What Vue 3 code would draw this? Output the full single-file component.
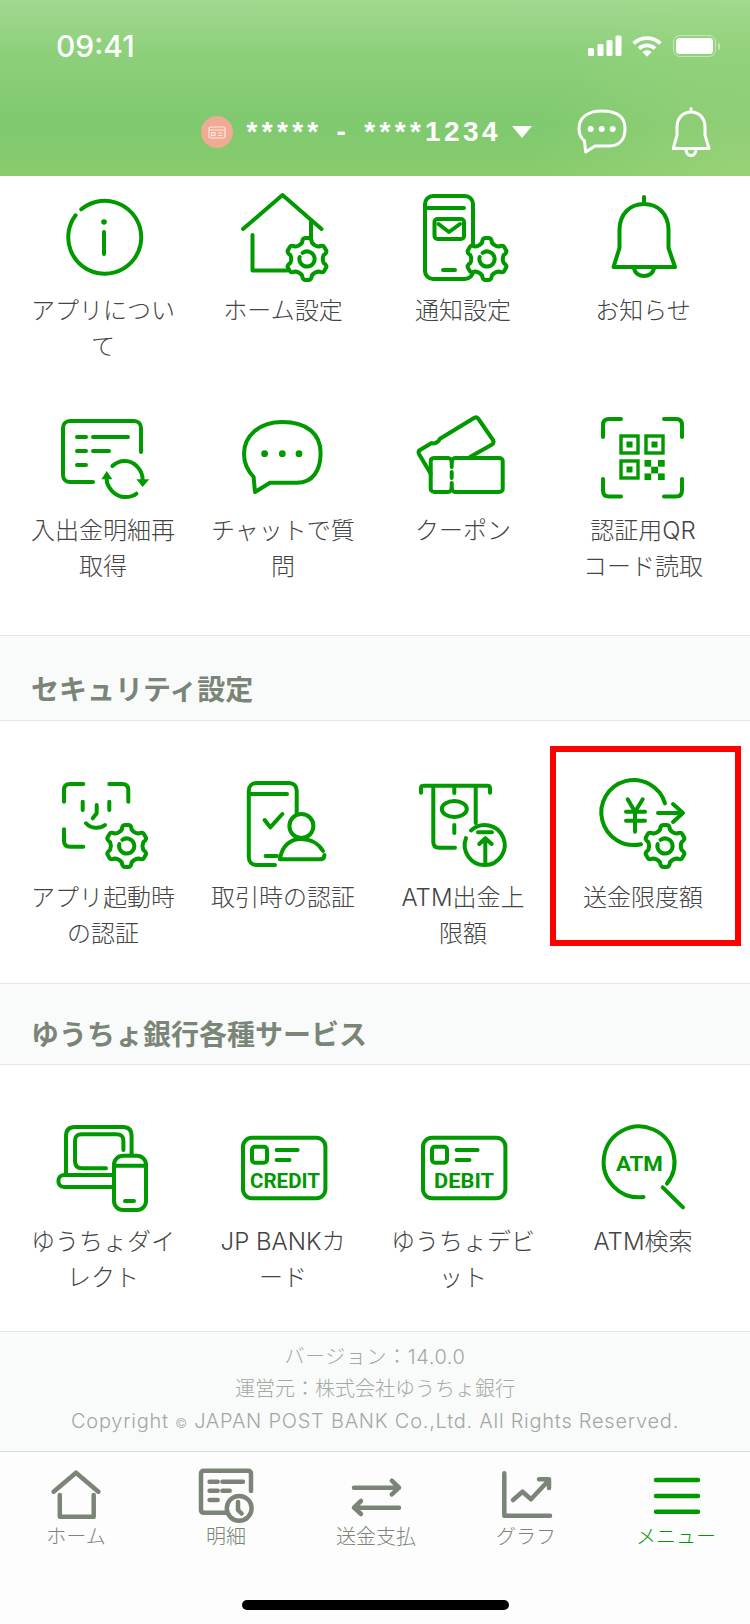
<script setup>
// Six-tooth settings gear, centred on the origin, placed with a translate in each icon
function buildGear() {
  const at = (deg, r) => {
    const a = (deg * Math.PI) / 180
    return `${(r * Math.cos(a)).toFixed(2)} ${(r * Math.sin(a)).toFixed(2)}`
  }
  let d = ''
  for (let i = 0; i < 6; i++) {
    const a = i * 60 - 90
    d += `${i === 0 ? 'M' : 'L'}${at(a - 17, 17)} Q${at(a - 12, 21.5)} ${at(a - 5, 21)} L${at(a + 5, 21)} Q${at(a + 12, 21.5)} ${at(a + 17, 17)} Q${at(a + 30, 15)} ${at(a + 43, 17)} `
  }
  return d + 'Z'
}
const gear = buildGear()
// inner ring of the gear, left open at the upper left
const ring = 'M-4.36 -6.22A7.6 7.6 0 1 1 -7.34 -1.97'

const tabs = ['ホーム', '明細', '送金支払', 'グラフ', 'メニュー']
</script>

<template>
  <div class="screen">
    <header class="top">
      <div class="status">
        <span class="clock">09:41</span>
        <div class="status-icons">
          <svg class="signal" width="34" height="22" viewBox="0 0 34 22" fill="#fff">
            <rect x="0" y="13" width="6" height="8" rx="1.5" />
            <rect x="9.5" y="9" width="6" height="12" rx="1.5" />
            <rect x="18.5" y="5" width="6" height="16" rx="1.5" />
            <rect x="27.5" y="0.5" width="6" height="20.5" rx="1.5" />
          </svg>
          <svg class="wifi" width="30" height="22" viewBox="0 0 30 22">
            <path d="M1.6 8.4A19.4 19.4 0 0 1 28.4 8.4" fill="none" stroke="#fff" stroke-width="3.8" />
            <path d="M7 13.6A11.6 11.6 0 0 1 23 13.6" fill="none" stroke="#fff" stroke-width="3.8" />
            <path d="M10.4 17A6.6 6.6 0 0 1 19.6 17L15 21.8Z" fill="#fff" />
          </svg>
          <div class="battery"><i class="battery-level"></i></div>
          <i class="battery-nub"></i>
        </div>
      </div>
      <div class="account">
        <span class="account-badge">
          <svg width="18" height="13" viewBox="0 0 18 13" fill="none" stroke="#fbe5dc" stroke-width="1.2">
            <rect x="1" y="1" width="16" height="11" rx="1.5" />
            <path d="M1 4H17M10 7H14.5M10 9.5H14.5" />
            <rect x="3.5" y="6.5" width="3.5" height="3" />
          </svg>
        </span>
        <span class="account-no"><span class="mask">***** - ****</span>1234</span>
        <i class="caret"></i>
        <svg class="top-chat" width="50" height="46" viewBox="0 0 50 46" fill="none" stroke="#fff" stroke-width="3" stroke-linejoin="round">
          <path d="M18 37H32C42 37 48 31 48 19.5C48 8 40 2 25 2C10 2 2 9 2 19.5C2 25 4 29 7.5 32L8.7 43Z" />
          <g fill="#fff" stroke="none">
            <circle cx="13.7" cy="20" r="3" />
            <circle cx="24.7" cy="20" r="3" />
            <circle cx="35.7" cy="20" r="3" />
          </g>
        </svg>
        <svg class="top-bell" width="40" height="50" viewBox="0 0 40 50" fill="none" stroke="#fff" stroke-width="3" stroke-linecap="round" stroke-linejoin="round">
          <path d="M20 1.5V5M6 28V20C6 11 12 5 20 5C28 5 34 11 34 20V28L38 41.5H2.3Z" />
          <path d="M15 42C15 46 17 48.5 20 48.5C23 48.5 25 46 25 42" />
        </svg>
      </div>
    </header>

    <main class="content">
      <section class="grid grid-first">
        <div class="item">
          <svg class="ico" viewBox="0 0 100 100">
            <path d="M26.3 21.3A36.5 36.5 0 1 1 20.6 27.3" />
            <circle class="solid" cx="49" cy="34" r="2.8" />
            <path d="M49 44V66" />
          </svg>
          <p>アプリについて</p>
        </div>
        <div class="item">
          <svg class="ico" viewBox="0 0 100 100">
            <path d="M8 41L47.5 7L86.5 41M17.5 47V82.5H52M76 34V50" />
            <g transform="translate(72 71)">
              <path class="plate" :d="gear" />
              <path :d="ring" />
            </g>
          </svg>
          <p>ホーム設定</p>
        </div>
        <div class="item">
          <svg class="ico" viewBox="0 0 100 100">
            <rect x="10" y="8" width="48" height="83" rx="8" />
            <path d="M10 20H49M28 82H40" />
            <rect x="19.5" y="31" width="29.5" height="20" rx="3" />
            <path d="M23.5 36L34 44L45 36" />
            <g transform="translate(72 71)">
              <path class="plate" :d="gear" />
              <path :d="ring" />
            </g>
          </svg>
          <p>通知設定</p>
        </div>
        <div class="item">
          <svg class="ico" viewBox="0 0 100 100">
            <path d="M49 9V16M24.5 60V42C24.5 26 35 16 49 16C63 16 73.5 26 73.5 42V60L80 79H18.5Z" />
            <path d="M39 80C39.5 85 44 88 49 88C54 88 58.5 85 59 80" />
          </svg>
          <p>お知らせ</p>
        </div>
        <div class="item">
          <svg class="ico" viewBox="0 0 100 100">
            <path d="M86 44V20C86 16 83 13 79 13H15C11 13 8 16 8 20V67C8 71 11 74 15 74H38" />
            <path d="M22 29H31M38 29H73M22 43H31M38 43H54M22 57H31" />
            <path d="M51.7 71.3C51.7 79 60 89 70 89C75 89 78.5 88 81.4 85.7" />
            <path d="M87.6 71.3C87.6 63 80 53 70 53C65 53 60.5 55 57.4 58" />
            <path class="solid" d="M51.7 63L46.4 71.3H57.4ZM87.6 79L81.4 71.3H94.3Z" />
          </svg>
          <p>入出金明細再取得</p>
        </div>
        <div class="item">
          <svg class="ico" viewBox="0 0 100 100">
            <path d="M35 74.7H62C78 74.7 85.6 62 85.6 45C85.6 26 72 14 47.3 14C24 14 9 28 9 46C9 56 13 63 18.6 69L20 84Z" />
            <circle class="solid" cx="29.6" cy="45.7" r="3.4" />
            <circle class="solid" cx="47.3" cy="45.7" r="3.4" />
            <circle class="solid" cx="64" cy="45.7" r="3.4" />
          </svg>
          <p>チャットで質問</p>
        </div>
        <div class="item">
          <svg class="ico" viewBox="0 0 100 100">
            <path d="M15.7 65.7L4 46C3 44 3.5 43 5 42L16.7 35C19 36.5 24 34 25 30.7L59 10C61 9 62.5 9.3 63.5 11L78 32C79 34 78.5 35.5 77 36.5L55 49" />
            <path d="M20 50H33C35 50 36.7 52 36.7 54C36.7 52 38.5 50 40 50H84C86.5 50 87.7 51.5 87.7 53V81C87.7 82.5 86.5 84 84 84H40C38.5 84 36.7 82 36.7 80C36.7 82 35 84 33 84H20C17 84 15.7 82.5 15.7 81V53C15.7 51.5 17 50 20 50Z" />
            <path d="M36.7 54V59M36.7 64V70M36.7 75V80" />
          </svg>
          <p>クーポン</p>
        </div>
        <div class="item">
          <svg class="ico" viewBox="0 0 100 100">
            <path d="M26 11H14C10 11 8 13 8 17V29M69 11H81C85 11 87 13 87 17V29M26 88.5H14C10 88.5 8 86.5 8 82.5V71M69 88.5H81C85 88.5 87 86.5 87 82.5V71" />
            <g class="qr">
              <rect x="26" y="28" width="17" height="17" />
              <rect x="51" y="28" width="17" height="17" />
              <rect x="26" y="53" width="17" height="17" />
            </g>
            <g class="solid">
              <rect x="31.5" y="33.5" width="6" height="6" />
              <rect x="56.5" y="33.5" width="6" height="6" />
              <rect x="31.5" y="58.5" width="6" height="6" />
              <rect x="49.5" y="52" width="6.7" height="6.7" />
              <rect x="63" y="52" width="6.7" height="6.7" />
              <rect x="56.2" y="58.7" width="6.8" height="6.7" />
              <rect x="49.5" y="65.4" width="6.7" height="6.7" />
              <rect x="63" y="65.4" width="6.7" height="6.7" />
            </g>
          </svg>
          <p>認証用QR<br />コード読取</p>
        </div>
      </section>

      <h2 class="band band-security">セキュリティ設定</h2>

      <section class="grid grid-security">
        <div class="item">
          <svg class="ico" viewBox="0 0 100 100">
            <path d="M28.3 11H15C11 11 9 13 9 17V28.7M54.3 11H67C71 11 73.3 13 73.3 17V28.7M9 56.3V68C9 72 11 73.7 15 73.7H28.3" />
            <path d="M27.7 28.7V37M54.3 28.7V37M41.7 32V40.3L37.7 45.3M31 50.3C36 56 45 56 50 52" />
            <g transform="translate(71.7 73)">
              <path class="plate" :d="gear" />
              <path :d="ring" />
            </g>
          </svg>
          <p>アプリ起動時の認証</p>
        </div>
        <div class="item">
          <svg class="ico" viewBox="0 0 100 100">
            <path d="M61.7 41V18C61.7 13 58.7 10 54 10H21.5C17 10 13.8 13 13.8 18V84C13.8 89 17 92 21.5 92H40" />
            <path d="M14 21H52M29.6 47L35.3 54.3L47.3 41M30.6 83H42" />
            <circle class="plate" cx="66.4" cy="53" r="12" />
            <path class="plate" d="M45 86C47 72 56 66 66 66C76 66 84 71 88 78" />
            <path d="M45 86.3H85C88 86.3 89.4 85 89.4 82" />
          </svg>
          <p>取引時の認証</p>
        </div>
        <div class="item">
          <svg class="ico" viewBox="0 0 100 100">
            <path d="M6 19.7V15C6 13.5 7 12.7 9 12.7H72C74 12.7 75 13.5 75 15V19.7" />
            <path d="M18.3 13V69C18.3 72.7 20.3 74.7 24 74.7H40M60.7 13V50M39.3 15V20M39.3 52V60" />
            <ellipse cx="39.3" cy="36" rx="12.5" ry="8" />
            <path d="M56 57.5A20 20 0 1 1 51 65" />
            <path d="M63 59.3H77M70.3 90V65.3M64.3 71L70.3 65.3L76.7 71" />
          </svg>
          <p>ATM出金上限額</p>
        </div>
        <div class="item item-marked">
          <svg class="ico" viewBox="0 0 100 100">
            <path d="M70 30.4A32.5 32.5 0 1 0 46 71.2" />
            <path d="M32.7 26.3L40 38.7L47.7 26.3M31 38.7H50M31 47.7H50M40 38.7V58.7" />
            <path d="M63 40H87M78 31L88 40L78 49" />
            <g transform="translate(70 73)">
              <path class="plate" :d="gear" />
              <path :d="ring" />
            </g>
          </svg>
          <p>送金限度額</p>
          <div class="marker"></div>
        </div>
      </section>

      <h2 class="band band-services">ゆうちょ銀行各種サービス</h2>

      <section class="grid grid-services">
        <div class="item">
          <svg class="ico" viewBox="0 0 100 100">
            <path d="M11 56V19C11 13 14 10 20 10H68C74 10 76.6 13 76.6 19V38" />
            <path d="M51 51.3H27C22 51.3 20 49 20 44V24C20 19 22 17.3 27 17.3H61C66 17.3 68.4 19 68.4 24V33" />
            <path d="M59 58H9C5 58 3.4 61 3.4 64C3.4 67 5 70 9 70H59" />
            <rect class="plate" x="59" y="38.7" width="32" height="54.3" rx="9" />
            <path d="M59 48.7H91M70 84H79" />
          </svg>
          <p>ゆうちょダイレクト</p>
        </div>
        <div class="item">
          <svg class="ico" viewBox="0 0 100 100">
            <rect x="8" y="20.7" width="82.4" height="60.6" rx="9" />
            <rect x="17" y="29.7" width="15" height="16" rx="3" />
            <path d="M41.6 33H62.6M41.6 43H54.5" />
            <text class="card-text" x="50" y="70.5" textLength="70" lengthAdjust="spacingAndGlyphs">CREDIT</text>
          </svg>
          <p>JP BANKカード</p>
        </div>
        <div class="item">
          <svg class="ico" viewBox="0 0 100 100">
            <rect x="8" y="20.7" width="82.4" height="60.6" rx="9" />
            <rect x="17" y="29.7" width="15" height="16" rx="3" />
            <path d="M41.6 33H62.6M41.6 43H54.5" />
            <text class="card-text" x="49" y="70.5" textLength="60" lengthAdjust="spacingAndGlyphs">DEBIT</text>
          </svg>
          <p>ゆうちょデビット</p>
        </div>
        <div class="item">
          <svg class="ico" viewBox="0 0 100 100">
            <path d="M72 66.6A35.4 35.4 0 1 0 48.5 80" />
            <path d="M67.7 70.3L88 90.3" />
            <text class="card-text" x="44.4" y="53.5" textLength="47" lengthAdjust="spacingAndGlyphs">ATM</text>
          </svg>
          <p>ATM検索</p>
        </div>
      </section>

      <footer class="about">
        <p class="version">バージョン：14.0.0</p>
        <p>運営元：株式会社ゆうちょ銀行</p>
        <p class="copyright">Copyright <small>©</small> JAPAN POST BANK Co.,Ltd. All Rights Reserved.</p>
      </footer>
    </main>

    <nav class="tabbar">
      <div class="tabs">
        <div v-for="(label, i) in tabs" :key="label" class="tab" :class="{ active: i === 4 }">
          <svg class="tab-ico" viewBox="0 0 60 57">
            <template v-if="i === 0">
              <path d="M7.6 25.7L30 6.7L52.4 25.7M13.8 29V50.7H47.7V29" />
            </template>
            <template v-else-if="i === 1">
              <path d="M55 25V8C55 6 54 4.7 52 4.7H8C6 4.7 5 6 5 8V43.7C5 45.7 6 46.7 8 46.7H31" />
              <path d="M13.6 15.7H21.7M26.5 15.7H47M13.6 24.7H21.7M26.5 24.7H33.7M13.6 34H21.7" />
              <circle class="tab-plate" cx="43.2" cy="42.3" r="12.4" />
              <path d="M42 36V44L45.6 47.5" />
            </template>
            <template v-else-if="i === 2">
              <path d="M8 21.7H53M45.8 14.7L53 21.7L45.8 28.4M53 41.7H8M15 35L8 41.7L15 48" />
            </template>
            <template v-else-if="i === 3">
              <path d="M8.3 7.3V49.7H54" />
              <path d="M17 34L26.5 25.7L35 33.3L53 14M43 13.3H53V22" />
            </template>
            <template v-else>
              <path d="M10 14H52M10 30H52M10 45.7H52" />
            </template>
          </svg>
          <span>{{ label }}</span>
        </div>
      </div>
      <div class="home-bar"></div>
    </nav>
  </div>
</template>

<style>
html,
body {
  margin: 0;
  background: #fff;
}
</style>

<style scoped>
.screen {
  width: 750px;
  height: 1624px;
  display: flex;
  flex-direction: column;
  overflow: hidden;
  background: #fff;
  color: #444;
  font-family: "Liberation Sans", "Noto Sans CJK JP", sans-serif;
}

/* green header */
.top {
  height: 176px;
  flex: none;
  box-sizing: border-box;
  padding: 30px 0 0;
  background:
    radial-gradient(ellipse 220px 200px at 100% 100%, rgba(170, 216, 130, 0.5), rgba(170, 216, 130, 0) 100%),
    linear-gradient(180deg, #a1d98f 0%, #8dd07b 30%, #7fc96f 70%, #88cc6d 100%);
  color: #fff;
}
.status {
  height: 32px;
  display: flex;
  align-items: center;
  justify-content: space-between;
  padding: 0 30px 0 56px;
}
.clock {
  font-family: Inter, sans-serif;
  font-size: 30px;
  font-weight: 500;
}
.status-icons {
  display: flex;
  align-items: center;
}
.signal {
  margin-right: 10px;
}
.wifi {
  margin-right: 11px;
}
.battery {
  width: 43px;
  height: 22px;
  box-sizing: border-box;
  padding: 2px;
  border: 1.5px solid rgba(255, 255, 255, 0.45);
  border-radius: 7px;
}
.battery-level {
  display: block;
  height: 100%;
  background: #fff;
  border-radius: 3.5px;
}
.battery-nub {
  width: 2.5px;
  height: 7px;
  margin-left: 2px;
  background: rgba(255, 255, 255, 0.45);
  border-radius: 0 2px 2px 0;
}
.account {
  display: flex;
  align-items: center;
  justify-content: flex-end;
  height: 50px;
  margin-top: 45px;
  padding-right: 39px;
}
.account-badge {
  width: 32px;
  height: 32px;
  border-radius: 50%;
  display: flex;
  align-items: center;
  justify-content: center;
  background: #efab94;
  margin-right: 14px;
}
.account-no {
  font-size: 28px;
  font-weight: 700;
  letter-spacing: 3.4px;
  white-space: nowrap;
}
.mask {
  letter-spacing: 4.3px;
  word-spacing: 2px;
}
.caret {
  width: 0;
  height: 0;
  margin-left: 11px;
  border-left: 10.5px solid transparent;
  border-right: 10.5px solid transparent;
  border-top: 12.5px solid #fff;
}
.top-chat {
  margin-left: 45px;
}
.top-bell {
  margin-left: 44px;
}

/* menu grids */
.content {
  flex: 1;
}
.grid {
  display: grid;
  grid-template-columns: repeat(4, 1fr);
  padding: 0 15px;
}
.grid-first {
  padding-top: 12px;
  padding-bottom: 50px;
  row-gap: 43px;
}
.grid-first .item p {
  margin-top: 5px;
}
.grid-security {
  padding-top: 52px;
  padding-bottom: 31px;
}
.grid-services {
  padding-top: 52px;
  padding-bottom: 35px;
}
.item {
  position: relative;
  padding: 0 17px;
  text-align: center;
}
.item p {
  margin: 7px 0 0 -2px;
  width: 146px;
  font-family: Inter, "Noto Sans CJK JP", sans-serif;
  font-size: 24px;
  font-weight: 300;
  line-height: 36px;
  min-height: 72px;
  word-break: break-all;
}
.ico {
  display: block;
  width: 100px;
  height: 100px;
  margin: 0 auto;
  fill: none;
  stroke: #009900;
  stroke-width: 4;
  stroke-linecap: round;
  stroke-linejoin: round;
}
.ico .solid {
  fill: #009900;
  stroke: none;
}
.ico .plate {
  fill: #fff;
}
.ico .qr {
  stroke-width: 3.4;
  stroke-linejoin: miter;
}
.ico .card-text {
  fill: #009900;
  stroke: none;
  font-family: Roboto, sans-serif;
  font-size: 21px;
  font-weight: 700;
  text-anchor: middle;
}

/* red highlight round the transfer limit cell */
.marker {
  position: absolute;
  left: -5px;
  right: -6px;
  top: -27px;
  bottom: 6px;
  border: 6px solid #ff0000;
}

.band {
  margin: 0;
  box-sizing: border-box;
  background: #f9fbfa;
  border-top: 1px solid #e4e7e4;
  border-bottom: 1px solid #e4e7e4;
  padding-left: 31px;
  font-size: 28px;
  font-weight: 700;
  line-height: 40px;
  color: #7a8578;
}
.band-security {
  height: 86px;
  padding-top: 35px;
}
.band-services {
  height: 82px;
  padding-top: 32px;
}

.about {
  height: 120px;
  box-sizing: border-box;
  padding-top: 9px;
  background: #f9fbfa;
  border-top: 1px solid #e4e7e4;
  text-align: center;
  font-family: Inter, "Noto Sans CJK JP", sans-serif;
  font-size: 20px;
  font-weight: 300;
  line-height: 32px;
  color: #a2a8a2;
}
.about p {
  margin: 0;
}
.about .version {
  letter-spacing: 0.6px;
}
.about .copyright {
  letter-spacing: 0.75px;
}
.about small {
  font-size: 13px;
}

/* bottom tab bar */
.tabbar {
  height: 173px;
  flex: none;
  box-sizing: border-box;
  border-top: 1px solid #d8dad8;
  background: #fdfdfd;
  padding-top: 14px;
}
.tabs {
  display: grid;
  grid-template-columns: repeat(5, 150px);
  margin-left: 1px;
}
.tab {
  display: flex;
  flex-direction: column;
  align-items: center;
  color: #7a8578;
  font-size: 20px;
  font-weight: 300;
  line-height: 28px;
}
.tab.active {
  color: #009900;
}
.tab-ico {
  width: 60px;
  height: 57px;
  fill: none;
  stroke: currentColor;
  stroke-width: 4.5;
  stroke-linecap: round;
  stroke-linejoin: round;
}
.tab-plate {
  fill: #fdfdfd;
}
.home-bar {
  width: 267px;
  height: 10px;
  margin: 49px auto 0;
  border-radius: 5px;
  background: #000;
}
</style>
